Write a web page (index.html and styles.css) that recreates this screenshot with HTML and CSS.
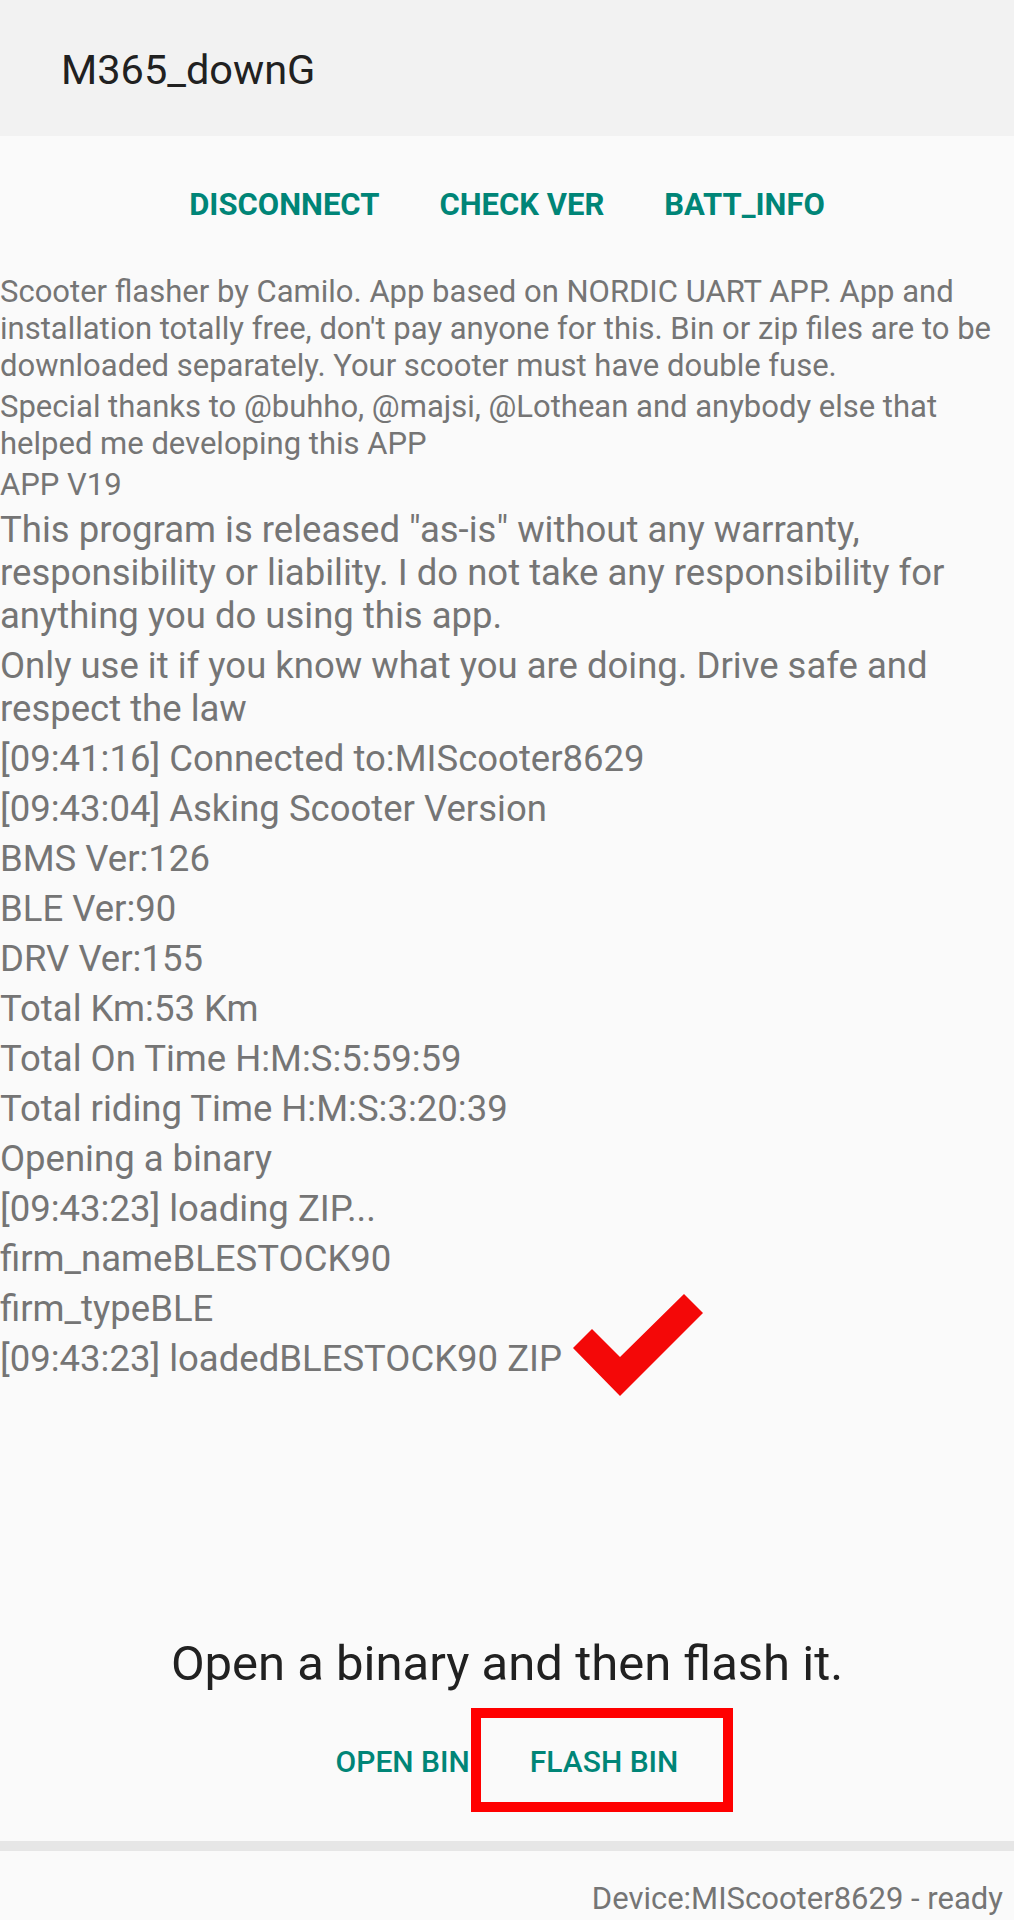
FILE: index.html
```html
<!DOCTYPE html>
<html lang="en">
<head>
    <meta charset="UTF-8">
    <title>M365_downG</title>
    <link rel="stylesheet" href="styles.css">
</head>
<body>
<div class="app">

    <!-- app bar -->
    <div class="appbar">M365_downG</div>

    <!-- top actions -->
    <div class="actions">
        <button class="text-btn strong">DISCONNECT</button>
        <button class="text-btn strong">CHECK VER</button>
        <button class="text-btn strong">BATT_INFO</button>
    </div>

    <!-- log -->
    <div class="log">
        <p class="note">Scooter flasher by Camilo. App based on NORDIC UART APP. App and installation totally free, don't pay anyone for this. Bin or zip files are to be downloaded separately. Your scooter must have double fuse.</p>
        <p class="note">Special thanks to @buhho, @majsi, @Lothean and anybody else that helped me developing this APP</p>
        <p class="note">APP V19</p>
        <p class="line">This program is released "as-is" without any warranty, responsibility or liability. I do not take any responsibility for anything you do using this app.</p>
        <p class="line">Only use it if you know what you are doing. Drive safe and respect the law</p>
        <p class="line">[09:41:16] Connected to:MIScooter8629</p>
        <p class="line">[09:43:04] Asking Scooter Version</p>
        <p class="line">BMS Ver:126</p>
        <p class="line">BLE Ver:90</p>
        <p class="line">DRV Ver:155</p>
        <p class="line">Total Km:53 Km</p>
        <p class="line">Total On Time H:M:S:5:59:59</p>
        <p class="line">Total riding Time H:M:S:3:20:39</p>
        <p class="line">Opening a binary</p>
        <p class="line">[09:43:23] loading ZIP...</p>
        <p class="line">firm_nameBLESTOCK90</p>
        <p class="line">firm_typeBLE</p>
        <p class="line">[09:43:23] loadedBLESTOCK90 ZIP</p>

        <!-- red check mark drawn over the screenshot -->
        <svg class="tick" width="130" height="102" viewBox="0 0 130 102">
            <polygon points="0,54 19,35 47,63 111,0 130,19 47,102" fill="#f40808"/>
        </svg>
    </div>

    <div class="hint">Open a binary and then flash it.</div>

    <div class="actions bottom">
        <button class="text-btn">OPEN BIN</button>
        <button class="text-btn marked">FLASH BIN<span class="frame"></span></button>
    </div>

    <div class="divider"></div>

    <div class="status">Device:MIScooter8629 - ready</div>
</div>
</body>
</html>
```

FILE: styles.css
```css
body {
    margin: 0;
    background-color: #fafafa;
    font-family: Roboto, "Liberation Sans", sans-serif;
}

.app {
    display: flex;
    flex-direction: column;
    height: 1920px;
    overflow: hidden;
}

/* 상단 바 */
.appbar {
    height: 136px;
    flex-shrink: 0;
    box-sizing: border-box;
    display: flex;
    align-items: center;
    padding: 2px 0 0 61px;
    background-color: #f2f2f2;
    color: #212121;
    font-size: 41.5px;
}

/* 버튼 줄 */
.actions {
    height: 137px;
    flex-shrink: 0;
    display: flex;
    justify-content: center;
    align-items: center;
    gap: 60px;
}

.text-btn {
    background: none;
    border: none;
    padding: 0;
    margin: 0;
    font-family: Roboto, "Liberation Sans", sans-serif;
    font-size: 30px;
    font-weight: 500;
    line-height: 40px;
    color: #008577;
    cursor: pointer;
}

.text-btn.strong {
    font-size: 31px;
    font-weight: 700;
}

/* 로그 */
.log {
    flex: 1;
    position: relative;
    color: #757575;
}

.log p {
    margin: 0;
}

.note {
    font-size: 31px;
    line-height: 37px;
}

.note + .note {
    margin-top: 4px;
}

.line {
    font-size: 36.5px;
    line-height: 43px;
}

.line + .line {
    margin-top: 7px;
}

.note + .line {
    margin-top: 5px;
}

.tick {
    position: absolute;
    left: 573px;
    top: 1021px;
}

.hint {
    flex-shrink: 0;
    text-align: center;
    font-size: 49px;
    line-height: 56px;
    color: #212121;
}

.actions.bottom {
    height: 40px;
    margin: 50px 0 59px;
}

.marked {
    position: relative;
}

/* 손으로 그린 빨간 테두리 */
.frame {
    position: absolute;
    left: -59px;
    top: -34px;
    width: 262px;
    height: 104px;
    box-sizing: border-box;
    border: 10px solid #ff0000;
}

.divider {
    height: 10px;
    flex-shrink: 0;
    background-color: #e6e6e6;
}

.status {
    flex-shrink: 0;
    padding: 28px 11px 1px 0;
    text-align: right;
    font-size: 31px;
    line-height: 40px;
    color: #757575;
}
```
